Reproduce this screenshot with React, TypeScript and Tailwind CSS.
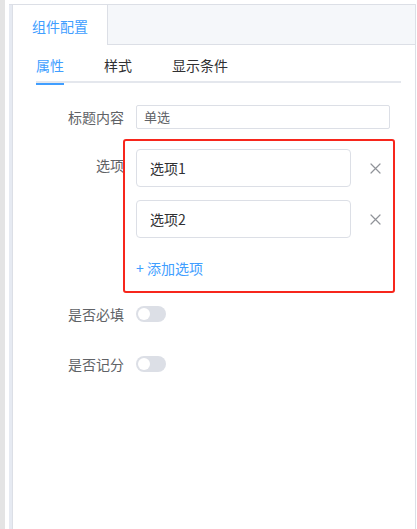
import React from "react";

const font = { fontFamily: '"Noto Sans CJK SC", "Noto Sans", sans-serif' };

function Switch() {
  return (
    <div className="relative w-[30px] h-[16px] rounded-full bg-[#dcdfe6]">
      <div className="absolute left-[2px] top-[2px] w-[12px] h-[12px] rounded-full bg-white" />
    </div>
  );
}

function CloseIcon() {
  return (
    <svg width="11" height="11" viewBox="0 0 11 11" fill="none">
      <path d="M1 1L10 10M10 1L1 10" stroke="#909399" strokeWidth="1.2" strokeLinecap="round" />
    </svg>
  );
}

function OptionRow({ text }: { text: string }) {
  return (
    <div className="flex items-center">
      <div className="shrink-0 w-[215px] h-[38px] border border-[#dcdfe6] rounded-[4px] flex items-center pl-[13px] text-[14px] text-[#303133]">
        {text}
      </div>
      <div className="shrink-0 ml-[19px] flex">
        <CloseIcon />
      </div>
    </div>
  );
}

export default function App() {
  return (
    <div className="w-[417px] h-[529px] flex bg-white overflow-hidden" style={font}>
      <div className="w-[5px] h-full bg-[#e4e4e4]" />
      <div className="w-[4px] h-full bg-white" />
      <div className="flex-1 flex flex-col pt-[4px] pr-[1px]">
        <div className="flex flex-1">
          <div className="w-[3px] bg-[#e6eaf2] border-t border-[#dcdfe6]" />
          <div className="flex-1 flex flex-col border border-b-0 border-[#dcdfe6]">
            {/* header tabs */}
            <div className="flex h-[40px] bg-[#f5f7fa]">
              <div className="w-[95px] h-[40px] bg-white border-r border-[#dcdfe6] flex items-center justify-center pt-[2px] text-[14px] text-[#409eff]">
                组件配置
              </div>
              <div className="flex-1 border-b border-[#dcdfe6]" />
            </div>
            {/* inner tabs */}
            <div className="flex flex-col pl-[23px] pr-[14px]">
              <div className="flex border-b-2 border-[#e4e7ed] h-[38px]">
                <div className="relative h-[38px] pt-[2px] flex items-center pr-[20px] text-[14px] text-[#409eff]">
                  属性
                  <div className="absolute left-0 bottom-[-2px] w-[28px] h-[2px] bg-[#409eff]" />
                </div>
                <div className="h-[38px] pt-[2px] flex items-center px-[20px] text-[14px] text-[#303133]">
                  样式
                </div>
                <div className="h-[38px] pt-[2px] flex items-center px-[20px] text-[14px] text-[#303133]">
                  显示条件
                </div>
              </div>
            </div>
            {/* form */}
            <div className="flex flex-col pt-[22px]">
              <div className="flex items-center h-[24px]">
                <div className="w-[123px] text-right pr-[12px] text-[14px] text-[#606266]">标题内容</div>
                <div className="w-[254px] h-[24px] border border-[#dcdfe6] rounded-[2px] flex items-center pl-[7px] text-[13px] text-[#606266]">
                  单选
                </div>
              </div>
              <div className="flex mt-[10px]">
                <div className="w-[123px] pt-[16px] text-right pr-[12px] text-[14px] text-[#606266] leading-[20px]">
                  选项
                </div>
                <div className="shrink-0 -ml-[13px] w-[272px] h-[154px] border-2 border-[#f7261c] rounded-[3px] pl-[11px] pt-[8px] flex flex-col gap-[13px] relative">
                  <OptionRow text="选项1" />
                  <OptionRow text="选项2" />
                  <div className="mt-[7px] text-[14px] text-[#409eff] leading-[20px]">+ 添加选项</div>
                </div>
              </div>
              <div className="flex items-center mt-[13px] h-[16px]">
                <div className="w-[123px] text-right pr-[12px] text-[14px] text-[#606266]">是否必填</div>
                <Switch />
              </div>
              <div className="flex items-center mt-[34px] h-[16px]">
                <div className="w-[123px] text-right pr-[12px] text-[14px] text-[#606266]">是否记分</div>
                <Switch />
              </div>
            </div>
          </div>
        </div>
      </div>
    </div>
  );
}
